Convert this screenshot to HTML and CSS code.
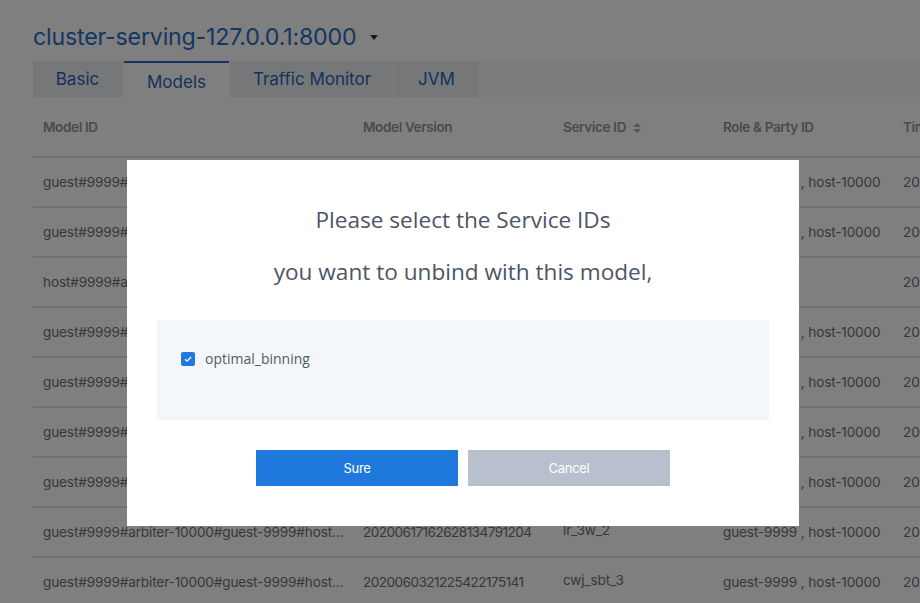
FILE: index.html
```html
<!DOCTYPE html>
<html>
<head>
<meta charset="utf-8">
<link rel="stylesheet" href="styles.css">
</head>
<body>
<div class="page">
  <div class="cluster">
    <span class="cluster-name">cluster-serving-127.0.0.1:8000</span>
    <span class="caret"></span>
  </div>
  <div class="tabs">
    <div class="tab">Basic</div>
    <div class="tab active">Models</div>
    <div class="tab">Traffic Monitor</div>
    <div class="tab">JVM</div>
  </div>
  <table class="grid">
    <thead>
      <tr>
        <th class="c1">Model ID</th>
        <th class="c2">Model Version</th>
        <th class="c3">Service ID <span class="sort"><i class="up"></i><i class="down"></i></span></th>
        <th class="c4">Role &amp; Party ID</th>
        <th class="c5">Timestamp</th>
      </tr>
    </thead>
    <tbody>
      <tr><td>guest#9999#arbiter-10000#guest-9999#host...</td><td class="num">20200617162628134791204</td><td>optimal_binning</td><td>guest-9999 , host-10000</td><td>2020-06-17 16:26:28</td></tr>
      <tr><td>guest#9999#arbiter-10000#guest-9999#host...</td><td class="num">20200617162628134791204</td><td>lr_3w_1</td><td>guest-9999 , host-10000</td><td>2020-06-17 16:26:28</td></tr>
      <tr><td>host#9999#arbiter-10000#guest-9999#host...</td><td class="num">20200617162628134791204</td><td>lr_3w_0</td><td>host-10000</td><td>2020-06-17 16:26:28</td></tr>
      <tr><td>guest#9999#arbiter-10000#guest-9999#host...</td><td class="num">20200617162628134791204</td><td>lr_3w</td><td>guest-9999 , host-10000</td><td>2020-06-17 16:26:28</td></tr>
      <tr><td>guest#9999#arbiter-10000#guest-9999#host...</td><td class="num">20200617162628134791204</td><td>hetero_lr</td><td>guest-9999 , host-10000</td><td>2020-06-17 16:26:28</td></tr>
      <tr><td>guest#9999#arbiter-10000#guest-9999#host...</td><td class="num">20200617162628134791204</td><td>sbt_1</td><td>guest-9999 , host-10000</td><td>2020-06-17 16:26:28</td></tr>
      <tr><td>guest#9999#arbiter-10000#guest-9999#host...</td><td class="num">20200617162628134791204</td><td>sbt_2</td><td>guest-9999 , host-10000</td><td>2020-06-17 16:26:28</td></tr>
      <tr><td>guest#9999#arbiter-10000#guest-9999#host...</td><td class="num">20200617162628134791204</td><td><span class="raised">lr_3w_2</span></td><td>guest-9999 , host-10000</td><td>2020-06-17 16:26:28</td></tr>
      <tr><td>guest#9999#arbiter-10000#guest-9999#host...</td><td class="num">2020060321225422175141</td><td><span class="raised">cwj_sbt_3</span></td><td>guest-9999 , host-10000</td><td>2020-06-03 21:22:54</td></tr>
    </tbody>
  </table>
</div>

<div class="mask">
  <div class="modal">
    <div class="modal-title">
      <div>Please select the Service IDs</div>
      <div>you want to unbind with this model,</div>
    </div>
    <div class="choices">
      <label class="check">
        <span class="box"><svg width="10" height="10" viewBox="0 0 10 10"><path d="M2 5.2 L4.1 7.2 L8 3" fill="none" stroke="#fff" stroke-width="1.3"/></svg></span>
        <span class="check-label">optimal_binning</span>
      </label>
    </div>
    <div class="actions">
      <button class="btn sure">Sure</button>
      <button class="btn cancel">Cancel</button>
    </div>
  </div>
</div>
</body>
</html>
```

FILE: styles.css
```css
html, body {
  margin: 0;
  padding: 0;
  background: #ffffff;
  overflow: hidden;
  width: 920px;
  height: 603px;
}
.page {
  padding: 20px 0 0 33px;
  font-family: Inter, "Liberation Sans", sans-serif;
  width: 1100px;
}
.cluster {
  display: flex;
  align-items: center;
  height: 34px;
}
.cluster-name {
  font-size: 23.2px;
  color: #2a6dc4;
  letter-spacing: -0.2px;
}
.caret {
  margin-left: 14px;
  width: 0;
  height: 0;
  border-left: 4px solid transparent;
  border-right: 4px solid transparent;
  border-top: 5px solid #333;
}
.tabs {
  display: flex;
  gap: 2px;
  margin-top: 7px;
  background: #f5f6f9;
  height: 36px;
}
.tab {
  background: #eceef2;
  color: #2a64b4;
  font-size: 17px;
  display: flex;
  align-items: center;
  justify-content: center;
  height: 36px;
  box-sizing: border-box;
}
.tab:nth-child(1) { width: 89px; }
.tab:nth-child(2) { width: 105px; }
.tab:nth-child(3) { width: 162px; }
.tab:nth-child(4) { width: 83px; }
.tab.active {
  background: #ffffff;
  border-top: 2px solid #2f6ac0;
  padding-top: 4px;
}
.grid {
  border-collapse: collapse;
  table-layout: fixed;
  width: 1000px;
  margin-top: 0;
}
.grid th, .grid td {
  text-align: left;
  padding: 0 0 0 10px;
  white-space: nowrap;
  overflow: hidden;
  border-bottom: 2px solid #e4e5e8;
}
.grid th {
  height: 59px;
  font-size: 13.5px;
  font-weight: 600;
  color: #959595;
  letter-spacing: -0.35px;
}
.grid td {
  height: 48px;
  font-size: 13.6px;
  color: #707070;
  letter-spacing: -0.15px;
}
.grid td.num { letter-spacing: -0.55px; }
.c1 { width: 310px; }
.c2 { width: 190px; }
.c3 { width: 150px; }
.c4 { width: 170px; }
.c5 { width: 180px; }
.raised { display: block; margin-bottom: 5px; }
.sort {
  display: inline-flex;
  flex-direction: column;
  gap: 2px;
  vertical-align: middle;
  margin-left: 4px;
}
.sort i {
  width: 0;
  height: 0;
  border-left: 4px solid transparent;
  border-right: 4px solid transparent;
}
.sort .up { border-bottom: 4px solid #aaa; }
.sort .down { border-top: 4px solid #aaa; }

.mask {
  position: fixed;
  inset: 0;
  background: rgba(0, 0, 0, 0.5);
  padding: 160px 0 0 127px;
}
.modal {
  width: 672px;
  height: 366px;
  background: #ffffff;
  box-sizing: border-box;
  padding: 34px 30px 0 30px;
  font-family: "Open Sans", "Noto Sans", sans-serif;
}
.modal-title {
  text-align: center;
  font-size: 22.6px;
  line-height: 52px;
  color: #4d5566;
}
.choices {
  margin-top: 22px;
  background: #f4f7fa;
  height: 100px;
  box-sizing: border-box;
  padding: 29px 24px 0 24px;
}
.check {
  display: flex;
  align-items: center;
  gap: 10px;
}
.box {
  width: 14px;
  height: 14px;
  border-radius: 2px;
  background: #1e7ae0;
  display: flex;
  align-items: center;
  justify-content: center;
}
.check-label {
  font-size: 14px;
  color: #555a66;
}
.actions {
  display: flex;
  justify-content: center;
  gap: 10px;
  margin-top: 30px;
}
.btn {
  width: 202px;
  height: 36px;
  border: none;
  color: #ffffff;
  font-family: Inter, "Liberation Sans", sans-serif;
  font-size: 13px;
  letter-spacing: -0.3px;
}
.sure { background: #1f79dc; }
.cancel { background: #b8bfcd; }
```
